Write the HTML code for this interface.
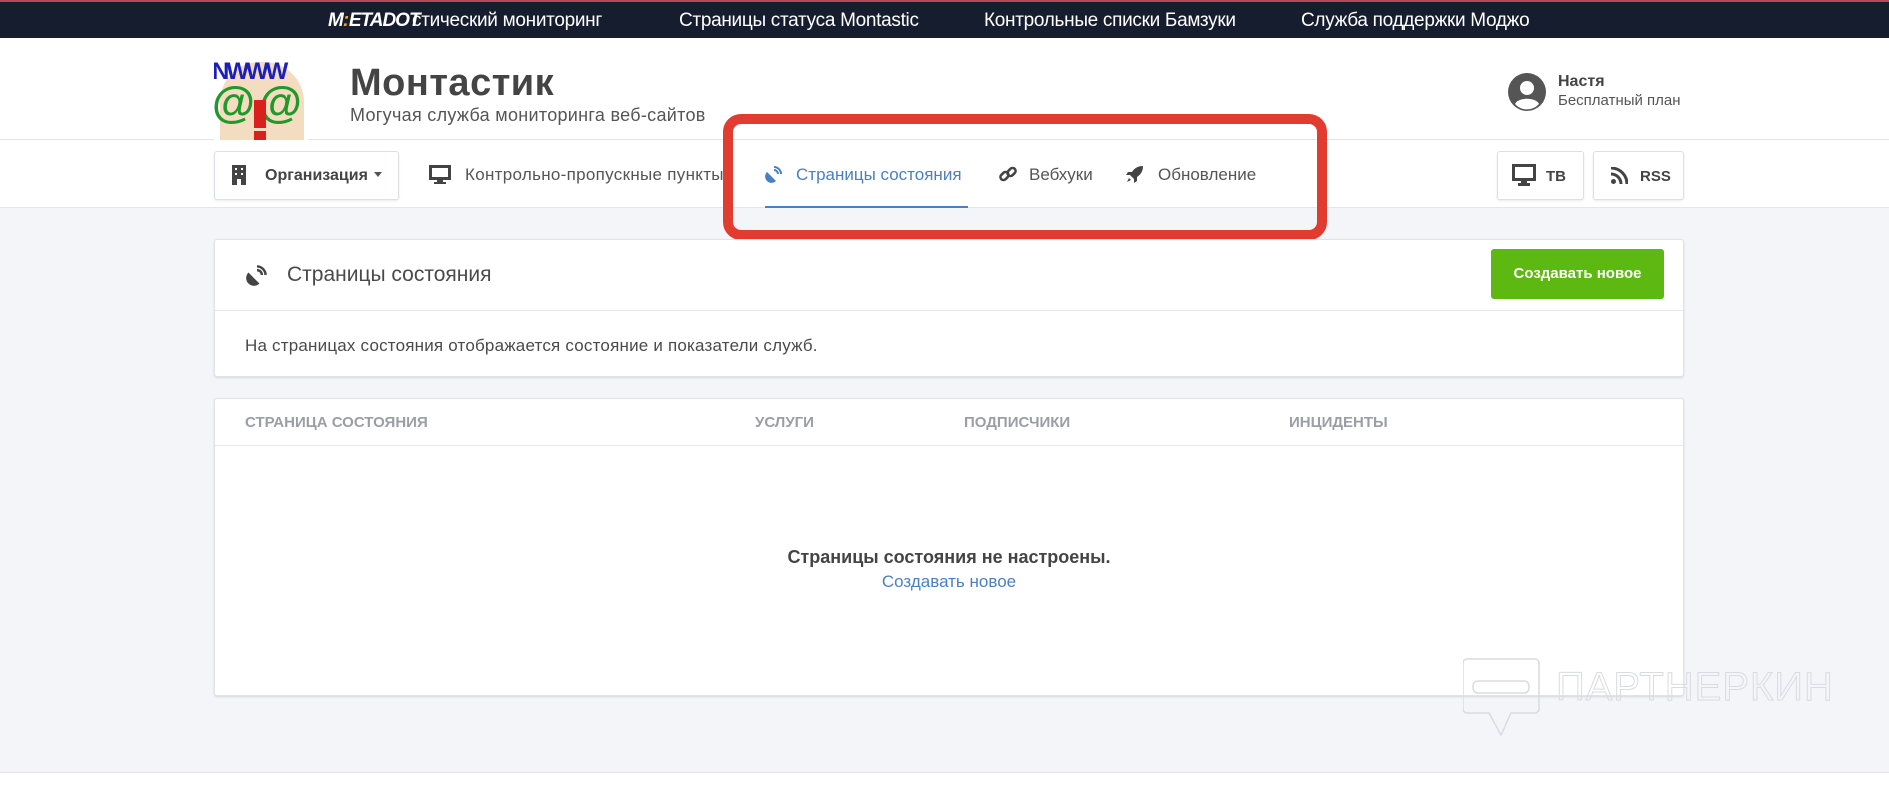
<!DOCTYPE html>
<html><head><meta charset="utf-8">
<style>
*{box-sizing:border-box;margin:0;padding:0}
body{width:1889px;height:792px;overflow:hidden;background:#f4f5f9;font-family:"Liberation Sans",sans-serif;color:#4a4a4a;position:relative}
.abs{position:absolute}
.top{left:0;top:0;width:1889px;height:38px;background:#161d2e;border-top:2px solid #b24a57}
.top span{position:absolute;top:8px;color:#fff;font-size:19px;letter-spacing:-0.3px}
.hdr{left:0;top:38px;width:1889px;height:102px;background:#fff;border-bottom:1px solid #e3e5ea}
.nav{left:0;top:140px;width:1889px;height:68px;background:#fff;border-bottom:1px solid #e3e5ea}
.btn{background:#fff;border:1px solid #dcdfe4;border-radius:3px;box-shadow:0 1px 2px rgba(0,0,0,.08)}
.navt{font-size:17px;color:#555;top:165px}
.card{background:#fff;border:1px solid #e1e3e8;border-radius:3px;box-shadow:0 1px 2px rgba(0,0,0,.12)}
.th{top:414px;font-size:15px;font-weight:bold;color:#9b9ea5}
</style></head><body>
<div class="abs top">
 <span style="left:328px;font-weight:bold;font-style:italic;letter-spacing:-1px">M<span style="position:static;color:#f2a31b">:</span>ETADOT</span>
 <span style="left:412px">стический мониторинг</span>
 <span style="left:679px">Страницы статуса Montastic</span>
 <span style="left:984px">Контрольные списки Бамзуки</span>
 <span style="left:1301px">Служба поддержки Моджо</span>
</div>
<div class="abs hdr"></div>
<!-- logo -->
<div class="abs" style="left:214px;top:56px;width:94px;height:84px;overflow:hidden;background:#fff">
 <div class="abs" style="left:6px;top:6px;width:84px;height:90px;background:#f3dcbf;border-radius:40px 40px 0 0"></div>
 <div class="abs" style="left:-2px;top:2px;font:bold 24px 'Liberation Sans';color:#1c1fb8;letter-spacing:-3px">NWWW</div>
 <div class="abs" style="left:-2px;top:22px;font:bold 44px 'Liberation Sans';color:#1f9a2a;letter-spacing:4px">@@</div>
 <div class="abs" style="left:40px;top:44px;width:12px;height:28px;background:#d8201c"></div>
 <div class="abs" style="left:40px;top:75px;width:12px;height:10px;background:#d8201c"></div>
</div>
<div class="abs" style="left:350px;top:62px;font-size:38px;font-weight:bold;color:#444;letter-spacing:0.5px">Монтастик</div>
<div class="abs" style="left:350px;top:105px;font-size:18px;color:#555;letter-spacing:0.3px">Могучая служба мониторинга веб-сайтов</div>
<svg class="abs" style="left:1508px;top:73px" width="38" height="38" viewBox="0 0 38 38"><circle cx="19" cy="19" r="19" fill="#555"/><circle cx="19" cy="15" r="7" fill="#fff"/><path d="M7 31c3-7 21-7 24 0a16 16 0 0 1-24 0z" fill="#fff"/></svg>
<div class="abs" style="left:1558px;top:73px;font-size:16px;font-weight:bold;color:#444">Настя</div>
<div class="abs" style="left:1558px;top:92px;font-size:15px;color:#555">Бесплатный план</div>

<div class="abs nav"></div>
<div class="abs btn" style="left:214px;top:151px;width:185px;height:49px"></div>
<svg class="abs" style="left:231px;top:165px" width="16" height="20" viewBox="0 0 16 20"><rect x="1" y="0" width="14" height="20" fill="#444"/><g fill="#fff"><rect x="4" y="3" width="2" height="2"/><rect x="10" y="3" width="2" height="2"/><rect x="4" y="8" width="2" height="2"/><rect x="10" y="8" width="2" height="2"/><rect x="6" y="14" width="4" height="6"/></g></svg>
<div class="abs" style="left:265px;top:167px;font-size:16px;font-weight:bold;color:#444">Организация</div>
<div class="abs" style="left:374px;top:172px;border:4px solid transparent;border-top:5px solid #555"></div>
<svg class="abs" style="left:429px;top:165px" width="22" height="19" viewBox="0 0 22 19"><rect x="1.5" y="1.5" width="19" height="12" fill="none" stroke="#444" stroke-width="3"/><rect x="8" y="14" width="6" height="3" fill="#444"/><rect x="5" y="17" width="12" height="2" fill="#444"/></svg>
<div class="abs navt" style="left:465px;letter-spacing:0.3px">Контрольно-пропускные пункты</div>
<svg class="abs" style="left:765px;top:165px" width="18" height="18" viewBox="0 0 18 18"><path d="M2 7a6 6 0 0 0 9 9z" fill="#4a7fc1"/><path d="M9 2a7 7 0 0 1 7 7M9 5a4 4 0 0 1 4 4" stroke="#4a7fc1" stroke-width="2" fill="none"/></svg>
<div class="abs navt" style="left:796px;color:#4a7fc1">Страницы состояния</div>
<div class="abs" style="left:765px;top:206px;width:203px;height:2px;background:#4a7fc1"></div>
<svg class="abs" style="left:999px;top:165px" width="18" height="18" viewBox="0 0 18 18"><g fill="none" stroke="#444" stroke-width="2.5"><rect x="1" y="8" width="9" height="6" rx="3" transform="rotate(-45 5.5 11)"/><rect x="8" y="4" width="9" height="6" rx="3" transform="rotate(-45 12.5 7)"/></g></svg>
<div class="abs navt" style="left:1029px">Вебхуки</div>
<svg class="abs" style="left:1126px;top:165px" width="18" height="18" viewBox="0 0 18 18"><path d="M17 1c-6 0-9 3-11 6H2L0 10h4l4 4v4l3-2v-4c3-2 6-5 6-11zM3 13l-2 4 4-2z" fill="#444"/></svg>
<div class="abs navt" style="left:1158px">Обновление</div>

<div class="abs btn" style="left:1497px;top:151px;width:87px;height:49px"></div>
<svg class="abs" style="left:1512px;top:164px" width="24" height="22" viewBox="0 0 24 22"><rect x="1.5" y="1.5" width="21" height="14" fill="none" stroke="#444" stroke-width="3"/><rect x="9" y="16" width="6" height="3" fill="#444"/><rect x="6" y="19" width="12" height="3" fill="#444"/></svg>
<div class="abs" style="left:1546px;top:168px;font-size:15px;font-weight:bold;color:#444">ТВ</div>
<div class="abs btn" style="left:1593px;top:151px;width:91px;height:49px"></div>
<svg class="abs" style="left:1611px;top:167px" width="17" height="17" viewBox="0 0 17 17"><circle cx="2.5" cy="14.5" r="2.5" fill="#444"/><path d="M0 7a10 10 0 0 1 10 10M0 1a16 16 0 0 1 16 16" stroke="#444" stroke-width="3" fill="none"/></svg>
<div class="abs" style="left:1640px;top:168px;font-size:15px;font-weight:bold;color:#444">RSS</div>

<!-- red box -->
<div class="abs" style="left:723px;top:114px;width:604px;height:126px;border:10px solid #e23b2f;border-radius:18px"></div>

<!-- card 1 -->
<div class="abs card" style="left:214px;top:239px;width:1470px;height:138px"></div>
<div class="abs" style="left:215px;top:310px;width:1468px;height:1px;background:#e5e7eb"></div>
<svg class="abs" style="left:246px;top:264px" width="22" height="22" viewBox="0 0 18 18"><path d="M2 7a6 6 0 0 0 9 9z" fill="#444"/><path d="M9 2a7 7 0 0 1 7 7M9 5a4 4 0 0 1 4 4" stroke="#444" stroke-width="2" fill="none"/></svg>
<div class="abs" style="left:287px;top:263px;font-size:21px;color:#4a4a4a">Страницы состояния</div>
<div class="abs" style="left:1491px;top:249px;width:173px;height:50px;background:#5db811;border-radius:3px;color:#fff;font-size:15px;font-weight:bold;text-align:center;line-height:50px">Создавать новое</div>
<div class="abs" style="left:245px;top:336px;font-size:17px;color:#4a4a4a;letter-spacing:0.2px">На страницах состояния отображается состояние и показатели служб.</div>

<!-- card 2 -->
<div class="abs card" style="left:214px;top:398px;width:1470px;height:298px"></div>
<div class="abs" style="left:215px;top:445px;width:1468px;height:1px;background:#e5e7eb"></div>
<div class="abs th" style="left:245px">СТРАНИЦА СОСТОЯНИЯ</div>
<div class="abs th" style="left:755px">УСЛУГИ</div>
<div class="abs th" style="left:964px">ПОДПИСЧИКИ</div>
<div class="abs th" style="left:1289px">ИНЦИДЕНТЫ</div>
<div class="abs" style="left:549px;width:800px;top:547px;text-align:center;font-size:18px;font-weight:bold;color:#444">Страницы состояния не настроены.</div>
<div class="abs" style="left:549px;width:800px;top:572px;text-align:center;font-size:17px;color:#4a7fc1">Создавать новое</div>

<!-- watermark -->
<svg class="abs" style="left:1463px;top:657px" width="78" height="82" viewBox="0 0 78 82"><path d="M4 2h68a4 4 0 0 1 4 4v46a4 4 0 0 1-4 4H48l-10 22L26 56H4a4 4 0 0 1-4-4V6a4 4 0 0 1 4-4z" fill="none" stroke="#d9dbe0" stroke-width="1.5"/><rect x="10" y="24" width="56" height="12" rx="5" fill="none" stroke="#d9dbe0" stroke-width="1.5"/></svg>
<div class="abs" style="left:1556px;top:665px;font-size:40px;color:transparent;-webkit-text-stroke:1px #d9dbe0;letter-spacing:1px">ПАРТНЕРКИН</div>

<div class="abs" style="left:0;top:772px;width:1889px;height:20px;background:#fff;border-top:1px solid #e3e5ea"></div>
</body></html>
